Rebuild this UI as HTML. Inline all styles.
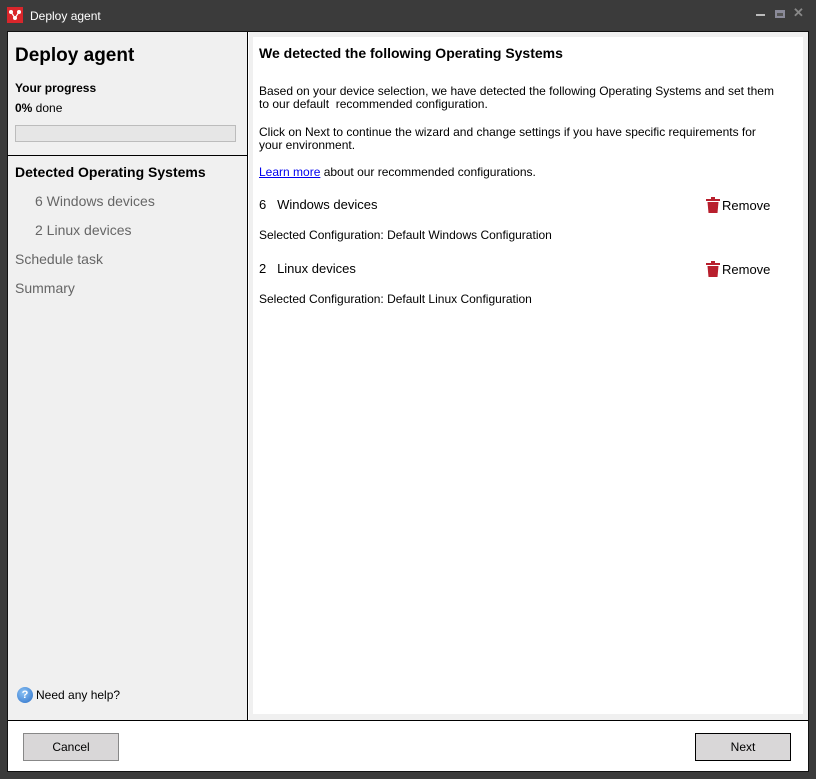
<!DOCTYPE html>
<html><head><meta charset="utf-8"><style>
*{margin:0;padding:0;box-sizing:border-box}
body{width:816px;height:779px;background:#3b3b3b;font-family:"Liberation Sans",Arial,sans-serif;position:relative;overflow:hidden}
.abs{position:absolute}
#title{left:0;top:0;width:816px;height:31px;background:#3b3b3b;color:#fff;font-size:12px}
#frame{left:7px;top:31px;width:802px;height:741px;background:#fff;border:1px solid #111}
#left{left:8px;top:32px;width:240px;height:688px;background:#f0f0f0;border-right:1px solid #000}
#right{left:249px;top:32px;width:559px;height:688px;background:#f0f0f0}
#rinner{left:253px;top:37px;width:550px;height:677px;background:#fff}
#foot{left:8px;top:720px;width:800px;height:51px;background:#fff;border-top:1px solid #000}
.btn{position:absolute;width:96px;height:28px;background:#d9d7d8;border:1px solid #888;font-size:12px;text-align:center;line-height:26px;color:#000}
.t{font-size:12px;color:#000;position:absolute;left:259px;line-height:13px}
.nav{position:absolute;font-size:14px;color:#666}
</style></head><body>
<div id="title" class="abs">
 <div class="abs" style="left:7px;top:7px;width:16px;height:16px;background:#d9262b"></div>
 <svg class="abs" style="left:7px;top:7px" width="16" height="16"><circle cx="4" cy="5" r="2" fill="#fff"/><circle cx="12" cy="5" r="2" fill="#fff"/><circle cx="8" cy="11" r="2" fill="#fff"/><path d="M4 5L8 11L12 5" stroke="#fff" stroke-width="1.2" fill="none"/></svg>
 <div class="abs" style="left:30px;top:9px">Deploy agent</div>
 <div class="abs" style="left:756px;top:14px;width:9px;height:2px;background:#bbb"></div>
 <div class="abs" style="left:775px;top:10px;width:10px;height:8px;border:2px solid #8a8a99;border-top-width:3px;background:#555"></div>
 <div class="abs" style="left:793px;top:5px;color:#888;font-size:13px;font-weight:bold">✕</div>
</div>
<div id="frame" class="abs"></div>
<div id="left" class="abs">
 <div class="abs" style="left:7px;top:13px;font-size:19px;font-weight:bold">Deploy agent</div>
 <div class="abs" style="left:7px;top:49px;font-size:12px;font-weight:bold">Your progress</div>
 <div class="abs" style="left:7px;top:69px;font-size:12px"><b>0%</b> done</div>
 <div class="abs" style="left:7px;top:93px;width:221px;height:17px;background:#e6e6e6;border:1px solid #bcbcbc"></div>
 <div class="abs" style="left:0;top:123px;width:240px;height:1px;background:#000"></div>
 <div class="nav" style="left:7px;top:132px;color:#000;font-weight:bold">Detected Operating Systems</div>
 <div class="nav" style="left:27px;top:161px">6 Windows devices</div>
 <div class="nav" style="left:27px;top:190px">2 Linux devices</div>
 <div class="nav" style="left:7px;top:219px">Schedule task</div>
 <div class="nav" style="left:7px;top:248px">Summary</div>
 <div class="abs" style="left:9px;top:655px;width:16px;height:16px;border-radius:50%;background:radial-gradient(circle at 40% 35%,#8cc3f5,#2a6fc9);color:#fff;font-size:11px;font-weight:bold;text-align:center;line-height:16px">?</div>
 <div class="abs" style="left:28px;top:656px;font-size:12px">Need any help?</div>
</div>
<div id="right" class="abs"></div>
<div id="rinner" class="abs"></div>
<div class="t" style="top:45px;font-size:14px;font-weight:bold;line-height:16px">We detected the following Operating Systems</div>
<div class="t" style="top:85px">Based on your device selection, we have detected the following Operating Systems and set them<br>to our default &nbsp;recommended configuration.</div>
<div class="t" style="top:126px">Click on Next to continue the wizard and change settings if you have specific requirements for<br>your environment.</div>
<div class="t" style="top:166px"><span style="color:#0000ee;text-decoration:underline">Learn more</span> about our recommended configurations.</div>
<div class="t" style="top:197px;font-size:13px;line-height:15px">6 &nbsp;&nbsp;Windows devices</div>
<div class="t" style="top:229px">Selected Configuration: Default Windows Configuration</div>
<div class="t" style="top:261px;font-size:13px;line-height:15px">2 &nbsp;&nbsp;Linux devices</div>
<div class="t" style="top:293px">Selected Configuration: Default Linux Configuration</div>
<svg class="abs" style="left:706px;top:197px" width="14" height="16"><rect x="0" y="2" width="14" height="2" fill="#b81f2d"/><rect x="5" y="0" width="4" height="2" fill="#b81f2d"/><path d="M1.5 5H12.5L11.5 16H2.5Z" fill="#b81f2d"/></svg>
<div class="t" style="left:722px;top:198px;font-size:13px;line-height:15px">Remove</div>
<svg class="abs" style="left:706px;top:261px" width="14" height="16"><rect x="0" y="2" width="14" height="2" fill="#b81f2d"/><rect x="5" y="0" width="4" height="2" fill="#b81f2d"/><path d="M1.5 5H12.5L11.5 16H2.5Z" fill="#b81f2d"/></svg>
<div class="t" style="left:722px;top:262px;font-size:13px;line-height:15px">Remove</div>
<div id="foot" class="abs">
 <div class="btn" style="left:15px;top:12px">Cancel</div>
 <div class="btn" style="left:687px;top:12px;border-color:#000">Next</div>
</div>
</body></html>
